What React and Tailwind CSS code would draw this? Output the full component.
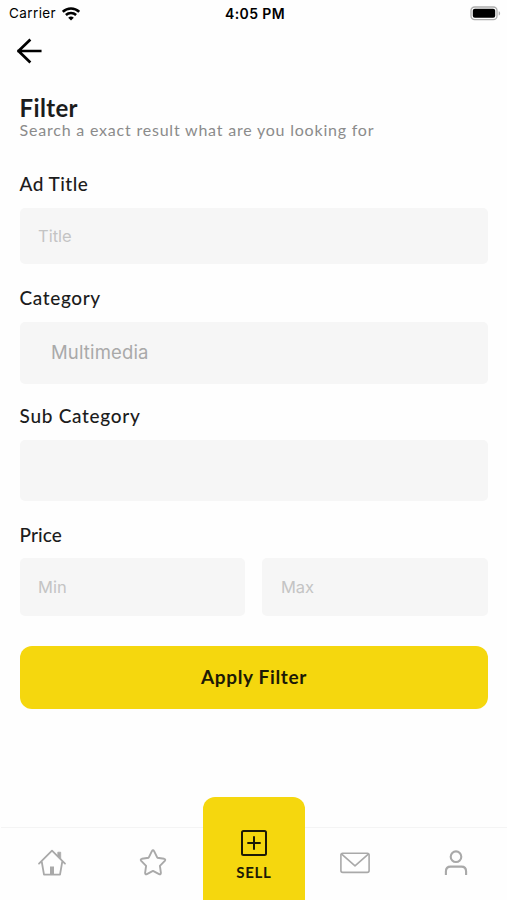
import React from 'react';

const display = "font-['Lato','Open_Sans',sans-serif]";

function StatusBar() {
  return (
    <header className="grid h-[27px] grid-cols-3 items-center pl-[9px] pr-[6px] text-black">
      <div className="flex items-center gap-[6px]">
        <span className="text-[13.5px] leading-[27px] tracking-[0.4px]">Carrier</span>
        <svg width="18" height="14" viewBox="0 0 18 14" fill="none" stroke="#000" strokeWidth="2.5">
          <path d="M.8 4.8a11.8 11.8 0 0 1 16.4 0" />
          <path d="M3.9 8a7.3 7.3 0 0 1 10.2 0" />
          <path d="M9 13.6 6.2 10.8a4 4 0 0 1 5.6 0Z" fill="#000" stroke="none" />
        </svg>
      </div>
      <span className="-mx-1 text-center text-[14px] font-semibold leading-[27px] tracking-[0.4px]">4:05 PM</span>
      <div className="flex justify-end">
        <svg width="31" height="15" viewBox="0 0 31 15">
          <rect x="1" y="1" width="26" height="12.6" rx="3.6" fill="#fff" stroke="#adadad" strokeWidth="1.3" />
          <rect x="2.8" y="2.8" width="22.4" height="9" rx="2" fill="#000" />
          <path d="M28.7 5.2c1.9.5 1.9 3.8 0 4.3Z" fill="#adadad" />
        </svg>
      </div>
    </header>
  );
}

function Label({ className, children }) {
  return <h2 className={`${display} h-6 whitespace-nowrap text-[19px] font-medium leading-6 text-[#1c1c1c] ${className}`}>{children}</h2>;
}

function Field({ className, children }) {
  return <div className={`flex items-center rounded-[5px] bg-[#f6f6f6] ${className}`}>{children}</div>;
}

function HomeIcon() {
  return (
    <svg width="30" height="30" viewBox="0 0 30 30" fill="none" stroke="#a9a9a9" strokeWidth="1.8" strokeLinecap="round" strokeLinejoin="round">
      <path d="M2 15.6 15 2.6l13 13M4.8 14l2.2 12.6h16L25.2 14" />
      <path d="M20.8 8V4.2h2.9v6.6Z" fill="#a9a9a9" strokeWidth=".8" />
      <path d="M13 18.5h4V27h-4Z" fill="#a9a9a9" stroke="none" />
    </svg>
  );
}

function StarIcon() {
  return (
    <svg width="30" height="30" viewBox="0 0 30 30" fill="none" stroke="#a9a9a9" strokeWidth="1.9" strokeLinejoin="round">
      <path d="M13.9 3.2q1.1-1.9 2.2 0l3.2 6.5 6.8 1.1q1.9.5.7 2l-4.9 5 1 7q0 2-1.8 1.3L15 22.9l-6.1 3.2q-1.8.7-1.8-1.3l1-7-4.9-5q-1.2-1.5.7-2l6.8-1.1Z" />
    </svg>
  );
}

function MailIcon() {
  return (
    <svg width="30" height="22" viewBox="0 0 30 22" fill="none" stroke="#a9a9a9" strokeWidth="1.6" strokeLinejoin="round">
      <rect x=".9" y="1.2" width="28.2" height="19.2" rx="1.8" />
      <path d="m1.4 1.9 13.6 11.9 13.6-11.9" />
    </svg>
  );
}

function UserIcon() {
  return (
    <svg width="24" height="28" viewBox="0 0 24 28" fill="none" stroke="#a9a9a9" strokeWidth="2.1">
      <circle cx="12" cy="7.7" r="5.3" />
      <path d="M1.9 25.9v-3.4c0-2.9 1.8-4.9 4.7-4.9h10.8c2.9 0 4.7 2 4.7 4.9v3.4" />
    </svg>
  );
}

function Tab({ children }) {
  return <div className="flex h-[73.5px] items-center justify-center border-t border-[#f4f4f4] pb-px">{children}</div>;
}

export default function App() {
  return (
    <div className="flex h-[900px] w-[507px] flex-col overflow-hidden bg-[#fefefe] font-['Inter',sans-serif]">
      <StatusBar />
      <button aria-label="Back" className="ml-4 mt-[11px] block h-[26px] w-[26px]">
        <svg width="26" height="26" viewBox="0 0 26 26" fill="none" stroke="#000" strokeWidth="2.7" strokeLinejoin="round" strokeLinecap="square">
          <path d="M24.2 13H2.5M13.4 2.5 2.5 13l10.9 10.5" />
        </svg>
      </button>

      <main className="ml-[19.6px] mt-8 flex w-[468.8px] flex-col">
        <h1 className={`${display} h-6 text-[24px] font-bold leading-6 tracking-[0.35px] text-[#1c1c1c]`}>Filter</h1>
        <p className={`${display} mt-px h-[18px] whitespace-nowrap text-[16px] leading-[18px] tracking-[0.79px] text-[#8b8b8b]`}>
          Search a exact result what are you looking for
        </p>

        <Label className="mt-[33px] tracking-[0.45px]">Ad Title</Label>
        <Field className="mt-3 h-14 pl-[18.4px] text-[16.5px] text-[#c4c4c4]">Title</Field>

        <Label className="mt-[22px] tracking-[0.6px]">Category</Label>
        <Field className="mt-[11.5px] h-[62px] pl-[31.4px] text-[18.5px] tracking-[0.15px] text-[#a9a9a9]">Multimedia</Field>

        <Label className="mt-[20.5px] tracking-[0.7px]">Sub Category</Label>
        <Field className="mt-3 h-[61px]" />

        <Label className="mt-[22px] tracking-[0.1px]">Price</Label>
        <div className="mt-[11px] grid grid-cols-2 gap-[17px] text-[16.5px] text-[#c4c4c4]">
          <Field className="h-[57.5px] pl-[18.4px] pt-px">Min</Field>
          <Field className="h-[57.5px] pl-[18.4px] pt-px">Max</Field>
        </div>

        <button className={`${display} mt-[30.5px] h-[63px] rounded-[12px] bg-[#f5d70e] pb-px text-[19px] font-bold tracking-[0.65px] text-[#1c1a06]`}>
          Apply Filter
        </button>
      </main>

      <nav className="mt-auto grid h-[103px] grid-cols-5 items-end pl-px">
        <Tab><HomeIcon /></Tab>
        <Tab><StarIcon /></Tab>
        <div className="flex h-[103px] flex-col items-center rounded-t-[12px] bg-[#f5d70e] pt-8">
          <svg width="28" height="28" viewBox="0 0 28 28" fill="none" stroke="#1c1a06" strokeWidth="2">
            <rect x="2" y="2" width="24" height="24" rx="1.5" />
            <path d="M14 7.3v13.4M7.3 14h13.4" />
          </svg>
          <span className={`${display} mt-[5px] text-[15px] font-bold leading-5 tracking-[0.7px] text-[#1c1a06]`}>SELL</span>
        </div>
        <Tab><MailIcon /></Tab>
        <Tab><UserIcon /></Tab>
      </nav>
    </div>
  );
}
